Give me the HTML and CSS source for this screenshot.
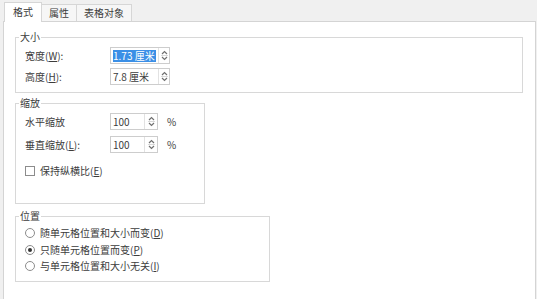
FILE: index.html
```html
<!DOCTYPE html>
<html lang="zh-CN">
<head>
<meta charset="utf-8">
<title>设置对象格式</title>
<link rel="stylesheet" href="styles.css">
</head>
<body>
<div class="tabs">
  <div class="tab active">格式</div>
  <div class="tab">属性</div>
  <div class="tab">表格对象</div>
</div>
<div class="panel">
  <fieldset class="group g-size">
    <legend>大小</legend>
    <div class="row">
      <span class="label">宽度(<u>W</u>):</span>
      <div class="spin w47">
        <span class="val"><span class="sel">1.73 厘米</span></span>
        <span class="arrows"><svg width="9" height="13" viewBox="0 0 9 13"><path d="M2 5 L4.5 2.5 L7 5" fill="none" stroke="#707070" stroke-width="1.2"/><path d="M1 6.5 H8" stroke="#d8d8d8" stroke-width="1"/><path d="M2 8 L4.5 10.5 L7 8" fill="none" stroke="#707070" stroke-width="1.2"/></svg></span>
      </div>
    </div>
    <div class="row">
      <span class="label">高度(<u>H</u>):</span>
      <div class="spin w47">
        <span class="val">7.8 厘米</span>
        <span class="arrows"><svg width="9" height="13" viewBox="0 0 9 13"><path d="M2 5 L4.5 2.5 L7 5" fill="none" stroke="#707070" stroke-width="1.2"/><path d="M1 6.5 H8" stroke="#d8d8d8" stroke-width="1"/><path d="M2 8 L4.5 10.5 L7 8" fill="none" stroke="#707070" stroke-width="1.2"/></svg></span>
      </div>
    </div>
  </fieldset>

  <fieldset class="group g-scale">
    <legend>缩放</legend>
    <div class="row">
      <span class="label">水平缩放</span>
      <div class="spin w33">
        <span class="val">100</span>
        <span class="arrows wide"><svg width="9" height="13" viewBox="0 0 9 13"><path d="M2 5 L4.5 2.5 L7 5" fill="none" stroke="#707070" stroke-width="1.2"/><path d="M1 6.5 H8" stroke="#d8d8d8" stroke-width="1"/><path d="M2 8 L4.5 10.5 L7 8" fill="none" stroke="#707070" stroke-width="1.2"/></svg></span>
      </div>
      <span class="pct">%</span>
    </div>
    <div class="row gap6">
      <span class="label">垂直缩放(<u>L</u>):</span>
      <div class="spin w33">
        <span class="val">100</span>
        <span class="arrows wide"><svg width="9" height="13" viewBox="0 0 9 13"><path d="M2 5 L4.5 2.5 L7 5" fill="none" stroke="#707070" stroke-width="1.2"/><path d="M1 6.5 H8" stroke="#d8d8d8" stroke-width="1"/><path d="M2 8 L4.5 10.5 L7 8" fill="none" stroke="#707070" stroke-width="1.2"/></svg></span>
      </div>
      <span class="pct">%</span>
    </div>
    <div class="check-row">
      <span class="checkbox"></span>
      <span class="opt">保持纵横比(<u>E</u>)</span>
    </div>
  </fieldset>

  <fieldset class="group g-pos">
    <legend>位置</legend>
    <div class="radio-row"><span class="radio"></span><span class="opt">随单元格位置和大小而变(<u>D</u>)</span></div>
    <div class="radio-row"><span class="radio on"></span><span class="opt">只随单元格位置而变(<u>P</u>)</span></div>
    <div class="radio-row"><span class="radio"></span><span class="opt">与单元格位置和大小无关(<u>I</u>)</span></div>
  </fieldset>
</div>
</body>
</html>
```

FILE: styles.css
```css
html, body {
  margin: 0;
  padding: 0;
}

body {
  width: 537px;
  height: 299px;
  overflow: hidden;
  background: #f0f0f0;
  font-family: "Noto Sans CJK SC", "Noto Sans", sans-serif;
  font-size: 10px;
  color: #3c3c3c;
}

u {
  text-decoration: underline;
  text-underline-offset: 1px;
}

/* ---------- tabs ---------- */
.tabs {
  display: flex;
  align-items: flex-end;
  height: 21px;
  padding-left: 4px;
}

.tab {
  height: 16px;
  line-height: 15px;
  padding: 0 7px;
  background: #f6f6f6;
  border: 1px solid #d6d6d6;
  border-bottom: none;
  border-left: none;
  color: #3c3c3c;
}

.tab.active {
  position: relative;
  z-index: 1;
  height: 19px;
  line-height: 18px;
  padding: 0 8px;
  margin-bottom: -1px;
  background: #fff;
  border-left: 1px solid #d6d6d6;
}

/* ---------- panel ---------- */
.panel {
  box-sizing: border-box;
  width: 533px;
  height: 290px;
  margin-left: 3px;
  padding: 8px 0 0 11px;
  background: #fff;
  border: 1px solid #d4d4d4;
}

.group {
  box-sizing: border-box;
  margin: 0;
  min-width: 0;
  border: 1px solid #d8d8d8;
  padding: 3px 0 7px 9px;
}

.group legend {
  margin-left: -6px;
  padding: 0 1px;
  line-height: 14px;
  font-size: 10px;
}

.g-size {
  width: 508px;
}

.g-scale {
  width: 190px;
  margin-top: 3px;
  padding-bottom: 25px;
}

.g-pos {
  width: 255px;
  margin-top: 5px;
  padding-top: 2px;
  padding-bottom: 6px;
}

/* ---------- rows ---------- */
.row {
  display: flex;
  align-items: center;
  height: 17px;
}

.row + .row {
  margin-top: 4px;
}

.row.gap6 {
  margin-top: 6px;
}

.label {
  width: 85px;
  flex: none;
  line-height: 14px;
}

.spin {
  display: flex;
  box-sizing: border-box;
  height: 17px;
  border: 1px solid #cdcdcd;
  background: #fff;
}

.val {
  display: flex;
  align-items: center;
  padding-left: 2px;
  line-height: 13px;
}

.w47 .val {
  width: 45px;
}

.w33 .val {
  width: 31px;
}

.sel {
  background: #3b8fe6;
  color: #fff;
  padding: 0 1px 0 0;
  line-height: 12px;
}

.arrows {
  display: flex;
  align-items: center;
  justify-content: center;
  width: 10px;
  border-left: 1px solid #e2e2e2;
}

.arrows.wide {
  width: 12px;
}

.pct {
  margin-left: 9px;
  line-height: 14px;
}

/* ---------- checkbox ---------- */
.check-row {
  display: flex;
  align-items: center;
  height: 14px;
  margin-top: 11px;
}

.checkbox {
  box-sizing: border-box;
  width: 10px;
  height: 10px;
  border: 1px solid #8c8c8c;
  background: #fff;
  flex: none;
}

.opt {
  margin-left: 5px;
  line-height: 14px;
}

/* ---------- radios ---------- */
.radio-row {
  display: flex;
  align-items: center;
  height: 16.5px;
}

.radio {
  position: relative;
  box-sizing: border-box;
  width: 10px;
  height: 10px;
  border: 1px solid #8c8c8c;
  border-radius: 50%;
  background: #fff;
  flex: none;
}

.radio.on::after {
  content: "";
  position: absolute;
  left: 2px;
  top: 2px;
  width: 4px;
  height: 4px;
  border-radius: 50%;
  background: #333;
}
```
